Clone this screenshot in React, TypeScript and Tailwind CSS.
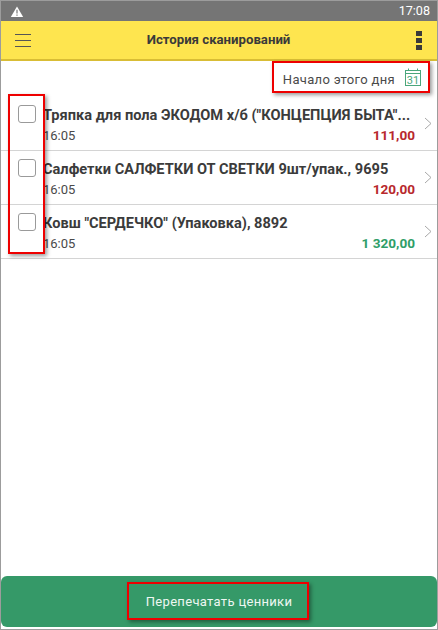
const rows = [
  { title: 'Тряпка для пола ЭКОДОМ х/б ("КОНЦЕПЦИЯ БЫТА"...', time: '16:05', sum: '111,00', color: 'text-[#b8282c]' },
  { title: 'Салфетки САЛФЕТКИ ОТ СВЕТКИ 9шт/упак., 9695', time: '16:05', sum: '120,00', color: 'text-[#b8282c]' },
  { title: 'Ковш "СЕРДЕЧКО" (Упаковка), 8892', time: '16:05', sum: '1 320,00', color: 'text-[#2f9e68]' },
];

function CalendarIcon() {
  return (
    <svg width="17" height="18" viewBox="0 0 17 18" fill="none" stroke="#4aa67c" strokeWidth="1">
      <rect x="0.5" y="2.5" width="15" height="15" />
      <path d="M0.5 5.5h15M3.5 0.5v2.5M12.5 0.5v2.5" />
      <text x="8" y="15.5" textAnchor="middle" fontSize="11" fontFamily="Roboto, sans-serif" fill="#4aa67c" stroke="none">31</text>
    </svg>
  );
}

function Row({ title, time, sum, color }: (typeof rows)[number]) {
  return (
    <div className="flex h-[54px] items-stretch border-b border-[#d4d4d4] pl-[12px] pr-[3px]">
      <div className="flex w-[30px] shrink-0 items-start pt-[8px] pl-[5px]">
        <div className="h-[18px] w-[18px] rounded-[3px] border border-[#9a9a9a] bg-white" />
      </div>
      <div className="min-w-0 flex-1 pt-[8px]">
        <div className="whitespace-nowrap text-[14.6px] leading-[20px] font-bold text-[#3b3b3b]">{title}</div>
        <div className="mt-px flex items-center justify-between pr-[9px] leading-[19px]">
          <span className="text-[13px] text-[#4a4a4a]">{time}</span>
          <span className={`text-[13.6px] font-bold ${color}`}>{sum}</span>
        </div>
      </div>
      <div className="flex w-[10px] shrink-0 items-center">
        <svg width="8" height="13" viewBox="0 0 8 13" fill="none" stroke="#a8a8a8" strokeWidth="1">
          <path d="M1 1l6 5.5L1 12" />
        </svg>
      </div>
    </div>
  );
}

export default function App() {
  return (
    <div className="relative flex h-[630px] w-[438px] flex-col overflow-hidden border-x border-b border-[#9c9c9c] bg-white font-['Roboto',sans-serif]">
      <div className="flex h-[21px] shrink-0 items-center justify-between border-t border-[#9c9c9c] bg-[#757575] pl-[9px] pr-[7px]">
        <svg width="14" height="11" viewBox="0 0 15 13">
          <path d="M7.5 0.5L14.8 13H0.2z" fill="#fff" />
          <path d="M6.8 4.5h1.4v4.5H6.8zM6.8 10h1.4v1.5H6.8z" fill="#757575" />
        </svg>
        <span className="text-[12.6px] text-white">17:08</span>
      </div>

      <div className="flex h-[40px] shrink-0 items-center justify-between border-b-2 border-[#d9bd35] bg-[#fee54f] pl-[14px] pr-[15px]">
        <div className="flex w-[16px] flex-col gap-[5px]">
          <div className="h-px bg-[#555]" />
          <div className="h-px bg-[#555]" />
          <div className="h-px bg-[#555]" />
        </div>
        <div className="text-[13.2px] font-bold text-[#3a3a3a]">История сканирований</div>
        <div className="flex w-[16px] justify-end">
          <div className="flex w-[6px] flex-col gap-[2px]">
            <div className="h-[5px] bg-[#3a3a3a]" />
            <div className="h-[5px] bg-[#3a3a3a]" />
            <div className="h-[5px] bg-[#3a3a3a]" />
          </div>
        </div>
      </div>

      <div className="flex h-[36px] shrink-0 items-center justify-end gap-[10px] pr-[15px] pb-[4px]">
        <span className="pt-[6px] text-[13px] tracking-wide text-[#4a4a4a]">Начало этого дня</span>
        <CalendarIcon />
      </div>

      <div className="flex-1">
        {rows.map((row) => (
          <Row key={row.title} {...row} />
        ))}
      </div>

      <div className="mb-[2px] flex h-[51px] shrink-0 items-center justify-center rounded-[6px] bg-[#359968]">
        <span className="text-[13px] tracking-wide text-[#eef7f2]">Перепечатать ценники</span>
      </div>

      {/* red annotation frames drawn over the screenshot */}
      <div className="absolute left-[271px] top-[61px] h-[32px] w-[158px] border-[2px] border-[#ee0000] shadow-[2px_2px_4px_rgba(0,0,0,0.4)]" />
      <div className="absolute left-[7px] top-[94px] h-[160px] w-[37px] border-[2px] border-[#ee0000] shadow-[2px_2px_4px_rgba(0,0,0,0.4)]" />
      <div className="absolute left-[126px] top-[582px] h-[38px] w-[182px] border-[2px] border-[#ee0000] shadow-[2px_2px_4px_rgba(0,0,0,0.4)]" />
    </div>
  );
}
